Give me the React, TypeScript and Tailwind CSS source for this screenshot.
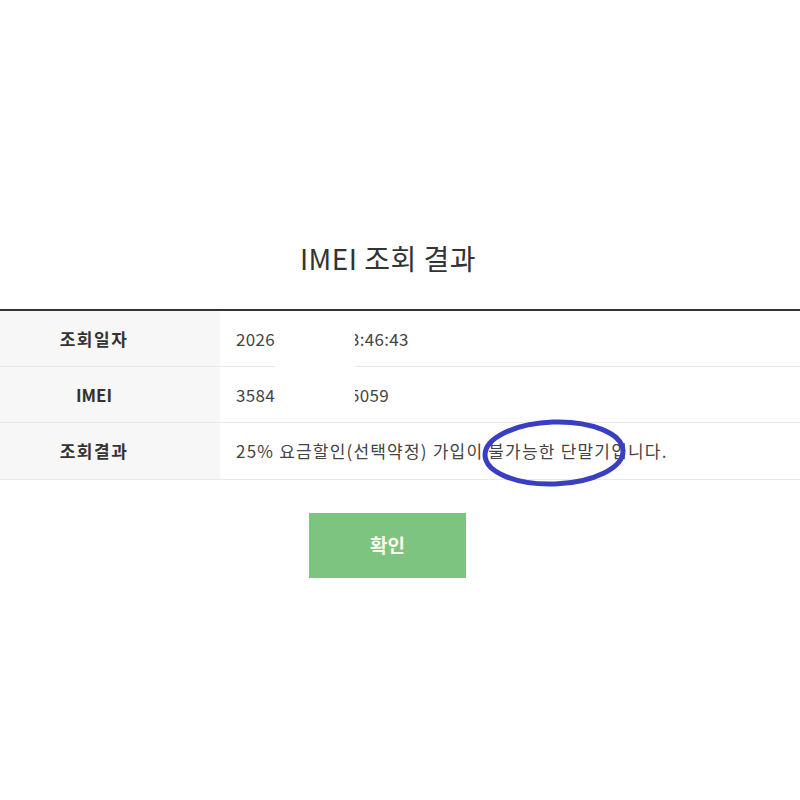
const rows = [
  { label: "조회일자", left: "2026", right: "3:46:43", labelClass: "tracking-[1.5px]" },
  { label: "IMEI", left: "3584", right: "5059", labelClass: "tracking-normal" },
]

export default function App() {
  return (
    <main
      className="relative w-[800px] h-[800px] bg-white text-[#333] overflow-hidden"
      style={{ fontFamily: '"Noto Sans CJK KR", "Noto Sans", sans-serif' }}
    >
      <h1 className="pt-[237px] pr-[24px] text-center text-[28px] leading-[42px] font-normal tracking-[0.5px] text-[#333]">
        IMEI 조회 결과
      </h1>
      <div className="mt-[30px] border-t-2 border-[#333]">
        {rows.map((row) => (
          <div key={row.label} className="flex h-[56px] border-b border-[#e8e8e8]">
            <div className={`w-[220px] shrink-0 flex items-center justify-center pr-[32px] bg-[#f7f7f7] text-[17px] font-bold ${row.labelClass}`}>
              {row.label}
            </div>
            <div className="flex items-center pl-[16px] text-[17px] tracking-[0.3px] text-[#444]">
              <span>{row.left}</span>
              <span className="w-[75px]" />
              <span>{row.right}</span>
            </div>
          </div>
        ))}
        <div className="flex h-[57px] border-b border-[#e8e8e8]">
          <div className="w-[220px] shrink-0 flex items-center justify-center pr-[32px] bg-[#f7f7f7] text-[17px] font-bold tracking-[1.5px]">
            조회결과
          </div>
          <div className="flex items-center pl-[16px] text-[17px] tracking-[1.2px] text-[#444]">
            25% 요금할인(선택약정) 가입이 불가능한 단말기입니다.
          </div>
        </div>
      </div>
      <div className="flex justify-center pt-[33px] pr-[25px]">
        <button className="w-[157px] h-[65px] bg-[#7cc47f] text-[#fdfbf0] text-[19px] font-bold">확인</button>
      </div>
      {/* redaction box over the date / IMEI */}
      <div className="absolute left-[275px] top-[330px] w-[80px] h-[80px] bg-white" />
      {/* hand-drawn highlight */}
      <svg className="absolute left-[478px] top-[416px]" width="152" height="74" viewBox="0 0 152 74">
        <ellipse cx="76" cy="37" rx="69" ry="31" fill="none" stroke="#3a3ec2" strokeWidth="5" transform="rotate(-2 76 37)" />
      </svg>
    </main>
  )
}
